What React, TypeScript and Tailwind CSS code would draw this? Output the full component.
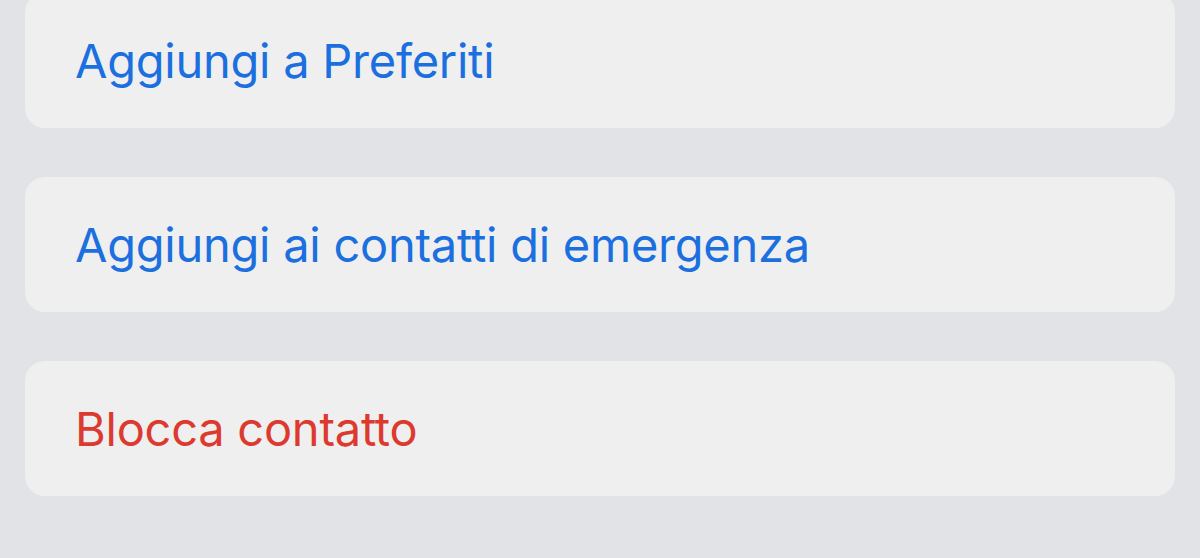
export default function App() {
  const rows = [
    { label: "Aggiungi a Preferiti", color: "text-[#1b6fde]" },
    { label: "Aggiungi ai contatti di emergenza", color: "text-[#1b6fde]" },
    { label: "Blocca contatto", color: "text-[#dd3a2f]" },
  ];
  return (
    <div className="h-[558px] w-[1200px] overflow-hidden bg-[#e2e3e7] font-['Inter',sans-serif]">
      <div className="-mt-[7px] flex flex-col gap-[49px] px-[25px]">
        {rows.map((r) => (
          <div
            key={r.label}
            className="flex h-[135px] items-center rounded-[20px] bg-[#efeff0] pl-[50px]"
          >
            <span className={`text-[47px] leading-none tracking-[-0.25px] ${r.color}`}>
              {r.label}
            </span>
          </div>
        ))}
      </div>
    </div>
  );
}
